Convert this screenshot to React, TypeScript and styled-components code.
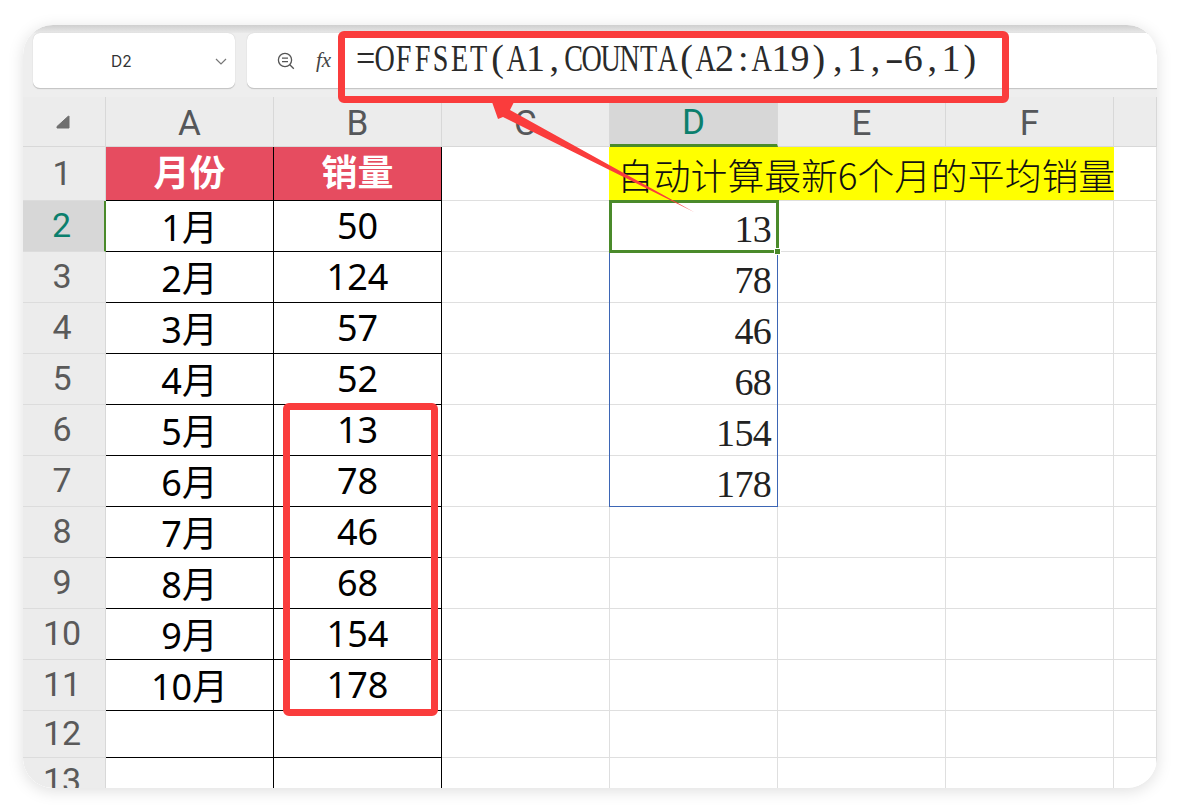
import { Fragment } from "react";
import styled, { createGlobalStyle } from "styled-components";

const GlobalStyle = createGlobalStyle`
  html, body { margin: 0; padding: 0; background: #fff; }
  #root { width: 1179px; height: 810px; overflow: hidden; }
`;

const Page = styled.div`
  width: 1179px; height: 810px; box-sizing: border-box;
  padding: 25px 22px 22px 23px;
`;

const Window = styled.div`
  position: relative;
  width: 1134px; height: 763px;
  border-radius: 30px; overflow: hidden;
  background: #fff;
  box-shadow: 0 3px 16px rgba(0,0,0,.13);
`;

const Shell = styled.div`
  position: absolute; inset: 0; border-radius: 30px; overflow: hidden;
`;

const Toolbar = styled.div`
  height: 72px; box-sizing: border-box;
  padding: 8px 0 0 10px;
  display: flex; align-items: flex-start; gap: 12px;
  background: linear-gradient(#cfcfcf 0, #e9e9e9 8px, #eeeeee 8px);
`;

const NameBox = styled.div`
  width: 202px; height: 56px; box-sizing: border-box;
  background: #fff; border-radius: 7px;
  border-bottom: 1px solid #c6c6c6;
  box-shadow: 0 0 1px #bbb;
  display: flex; align-items: center;
  font: 15.5px "Inter", "Liberation Sans", sans-serif; color: #333;
  span { margin-left: 78px; flex: 1; padding-top: 2px; }
  svg { margin-right: 7px; }
`;

const FormulaBox = styled.div`
  flex: 1; height: 56px; box-sizing: border-box;
  background: #fff; border-radius: 7px 0 0 7px;
  border-bottom: 1px solid #c6c6c6;
  box-shadow: 0 0 1px #bbb;
  display: flex; align-items: center;
  padding-left: 30px;
`;

const Fx = styled.i`
  font: italic 21px "Liberation Serif", serif; color: #444;
  margin-left: 21px; width: 23px;
`;

const Divider = styled.div`
  width: 1px; height: 26px; background: #c9c9c9; margin: 0 11px 0 5px;
`;

const FormulaText = styled.div`
  display: flex; margin-top: -5px;
  font: 38px/44px "Liberation Serif", serif; color: #2a2a2a;
`;

const Ch = styled.span<{ $squeeze: number }>`
  width: 18.9px; flex: none; display: inline-flex; justify-content: center;
  b { font-weight: 400; display: block; transform: scaleX(${({ $squeeze }) => $squeeze}); }
`;

const Sheet = styled.div`
  position: relative;
  display: grid;
  grid-template-columns: 83px repeat(6, 168px) 1fr;
  grid-template-rows: 50px 54px repeat(10, 51px) 47px 47px;
  background: #fff;
`;

const Corner = styled.div`
  background: #ececec; border-right: 1px solid #d8d8d8; border-bottom: 1px solid #d8d8d8;
  display: flex; align-items: center; padding-left: 33px;
`;

const ColHead = styled.div<{ $on?: boolean }>`
  box-sizing: border-box;
  background: ${({ $on }) => ($on ? "#d7d7d7" : "#ececec")};
  border-right: 1px solid #d8d8d8;
  border-bottom: ${({ $on }) => ($on ? "3px solid #4a8a2a" : "1px solid #d8d8d8")};
  color: ${({ $on }) => ($on ? "#0b7f6d" : "#55575a")};
  font: 35px "Roboto", "Liberation Sans", sans-serif;
  display: flex; align-items: center; justify-content: center;
  padding-top: 3px;
`;

const RowHead = styled.div<{ $on?: boolean }>`
  box-sizing: border-box;
  background: ${({ $on }) => ($on ? "#d7d7d7" : "#ececec")};
  border-right: ${({ $on }) => ($on ? "2px solid #4a8a2a" : "1px solid #d8d8d8")};
  border-bottom: 1px solid #dcdcdc;
  color: ${({ $on }) => ($on ? "#0b7f6d" : "#5a5a5a")};
  font: 34px "Roboto", "Liberation Sans", sans-serif;
  display: flex; align-items: center; justify-content: center;
  padding: 0 4px 2px 0;
`;

const Cell = styled.div`
  box-sizing: border-box;
  border-right: 1px solid #dfdfdf; border-bottom: 1px solid #dfdfdf;
`;

const TableCell = styled.div`
  box-sizing: border-box;
  border-right: 1px solid #000; border-bottom: 1px solid #000;
  color: #000;
  font: 36px "Noto Sans", "Noto Sans CJK SC", sans-serif;
  display: flex; align-items: center; justify-content: center;
  padding-bottom: 2px;
`;

const TitleCell = styled(TableCell)`
  background: #e64c60; color: #fff; font-weight: 700;
  font-size: 36px; padding-bottom: 6px;
`;

const NumberCell = styled(Cell)`
  font: 38px "Liberation Serif", serif; letter-spacing: -0.7px; color: #222;
  display: flex; align-items: flex-end; justify-content: flex-end;
  padding: 0 6px 0 0;
`;

const Banner = styled.div`
  grid-column: 5 / span 3;
  margin-left: -1px;
  background: #ffff00; color: #111;
  border-bottom: 1px solid #dfdfdf; box-sizing: border-box;
  font: 300 36.8px "Noto Sans CJK SC", sans-serif;
  display: flex; align-items: center; padding: 0 0 0 8px;
  white-space: nowrap;
`;

const RangeBox = styled.div`
  position: absolute; inset: 0 0 0 -1px;
  grid-column: 5 / span 1; grid-row: 3 / span 6;
  border: 1px solid #3d66b5; pointer-events: none;
`;

const ActiveBox = styled.div`
  position: absolute; inset: -1px -1px -1px -1px;
  grid-column: 5 / span 1; grid-row: 3 / span 1;
  border: 3px solid #4a8a2a; pointer-events: none;
  &::after {
    content: ""; position: absolute; right: -5px; bottom: -5px;
    width: 5px; height: 5px; background: #4a8a2a; border: 1px solid #fff;
  }
`;

const RedFrame = styled.div`
  position: absolute; box-sizing: border-box;
  border: 7px solid #fa3c3c; border-radius: 6px; pointer-events: none;
`;

const FormulaFrame = styled(RedFrame)`
  left: 315px; top: 6px; width: 671px; height: 72px;
`;

const SalesFrame = styled(RedFrame)`
  left: 260px; top: 378px; width: 155px; height: 313px;
`;

const ArrowLayer = styled.svg`
  position: absolute; left: 0; top: 0; pointer-events: none;
`;

const months = ["1月","2月","3月","4月","5月","6月","7月","8月","9月","10月"];
const sales = [50,124,57,52,13,78,46,68,154,178];
const latest: Record<number, number> = { 2: 13, 3: 78, 4: 46, 5: 68, 6: 154, 7: 178 };
const formula = "=OFFSET(A1,COUNTA(A2:A19),1,-6,1)";

function squeezeFor(c: string) {
  if (/[A-Z]/.test(c)) return 0.74;
  if (c === "=") return 0.9;
  if (c === "-") return 1.5;
  return 1;
}

export default function App() {
  const rows = Array.from({ length: 12 }, (_, i) => i + 2);
  return (
    <Page>
      <GlobalStyle />
      <Window>
        <Shell>
          <Toolbar>
            <NameBox>
              <span>D2</span>
              <svg width="14" height="14" viewBox="0 0 14 14" fill="none" stroke="#777" strokeWidth="1.2">
                <path d="M2 5l5 5 5-5" />
              </svg>
            </NameBox>
            <FormulaBox>
              <svg width="18" height="18" viewBox="0 0 18 18" fill="none" stroke="#555" strokeWidth="1.3">
                <circle cx="8" cy="8" r="6.6" />
                <path d="M5 6.2h6M5 9.6h6M12.8 12.8l4 4" />
              </svg>
              <Fx>fx</Fx>
              <Divider />
              <FormulaText>
                {formula.split("").map((c, i) => (
                  <Ch key={i} $squeeze={squeezeFor(c)}><b>{c}</b></Ch>
                ))}
              </FormulaText>
            </FormulaBox>
          </Toolbar>
          <Sheet>
            <Corner>
              <svg width="14" height="14" viewBox="0 0 14 14">
                <path d="M12.5 1L1 11.5v1.5h12V1.5z" fill="#6f6f6f" stroke="#6f6f6f" strokeLinejoin="round" />
              </svg>
            </Corner>
            {["A","B","C","D","E","F"].map((c) => (
              <ColHead key={c} $on={c === "D"}>{c}</ColHead>
            ))}
            <ColHead />

            <RowHead>1</RowHead>
            <TitleCell>月份</TitleCell>
            <TitleCell>销量</TitleCell>
            <Cell />
            <Banner>自动计算最新6个月的平均销量</Banner>
            <Cell />

            {rows.map((r) => (
              <Fragment key={r}>
                <RowHead $on={r === 2}>{r}</RowHead>
                <TableCell>{months[r - 2]}</TableCell>
                <TableCell>{sales[r - 2]}</TableCell>
                <Cell />
                {latest[r] ? <NumberCell>{latest[r]}</NumberCell> : <Cell />}
                <Cell />
                <Cell />
                <Cell />
              </Fragment>
            ))}
            <RangeBox />
            <ActiveBox />
          </Sheet>
        </Shell>
        <FormulaFrame />
        <SalesFrame />
        <ArrowLayer width="1134" height="763" viewBox="23 25 1134 763">
          <path d="M492 102L514 102L510 110L694 212L503 117L498 119Z" fill="#fa3c3c" />
        </ArrowLayer>
      </Window>
    </Page>
  );
}
